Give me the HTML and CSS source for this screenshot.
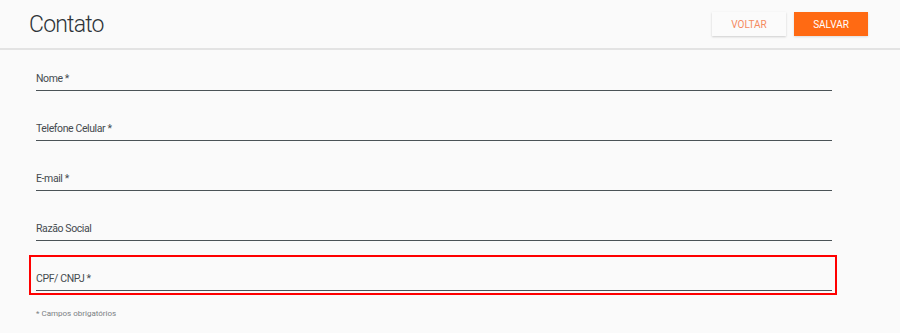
FILE: index.html
```html
<!DOCTYPE html>
<html lang="pt-BR">
<head>
  <meta charset="UTF-8">
  <meta name="viewport" content="width=device-width, initial-scale=1.0">
  <title>Contato</title>
  <link rel="stylesheet" href="styles.css">
</head>
<body>

  <div class="header">
    <h1 class="title">Contato</h1>
    <div class="actions">
      <button class="button button-back">VOLTAR</button>
      <button class="button button-save">SALVAR</button>
    </div>
  </div>

  <form class="form">
    <div class="field"><label>Nome *</label></div>
    <div class="field"><label>Telefone Celular *</label></div>
    <div class="field"><label>E-mail *</label></div>
    <div class="field"><label>Razão Social</label></div>
    <div class="field field-marked"><label>CPF/ CNPJ *</label></div>
    <p class="note">* Campos obrigatórios</p>
  </form>

</body>
</html>
```

FILE: styles.css
```css
body {
  margin: 0;
  font-family: Roboto, "Liberation Sans", sans-serif;
  background-color: #fafafa;
  color: #3a3f44;
}

.header {
  height: 48px;
  border-bottom: 2px solid #e3e3e3;
  padding: 0 32px 0 29px;
  display: flex;
  align-items: center;
  justify-content: space-between;
}

.title {
  margin: 0;
  font-size: 23px;
  font-weight: 300;
  color: #2e3338;
  letter-spacing: -0.8px;
}

.actions {
  display: flex;
  gap: 8px;
}

.button {
  width: 74px;
  height: 24px;
  border: none;
  font-family: inherit;
  font-size: 10px;
  cursor: pointer;
}

.button-back {
  background-color: #fbfbfb;
  color: #f58a60;
  box-shadow: 0 1px 2px rgba(0, 0, 0, 0.18);
}

.button-save {
  background-color: #ff6a13;
  color: #fff;
  box-shadow: 0 1px 2px rgba(0, 0, 0, 0.12);
}

.form {
  width: 796px;
  margin: 0 0 0 36px;
  padding-top: 1px;
}

.field {
  position: relative;
  height: 40px;
  margin-bottom: 10px;
  box-sizing: border-box;
  border-bottom: 1px solid #4b5357;
  display: flex;
  align-items: flex-end;
  padding-bottom: 5px;
}

.field label {
  font-size: 10.5px;
  line-height: 13px;
  color: #454a4f;
  letter-spacing: -0.4px;
}

.field-marked::after {
  content: "";
  position: absolute;
  top: 4px;
  left: -7px;
  right: -5px;
  bottom: -5px;
  border: 2px solid #ff0000;
}

.note {
  margin: 18px 0 0;
  font-size: 8px;
  color: #7a7f84;
}
```
